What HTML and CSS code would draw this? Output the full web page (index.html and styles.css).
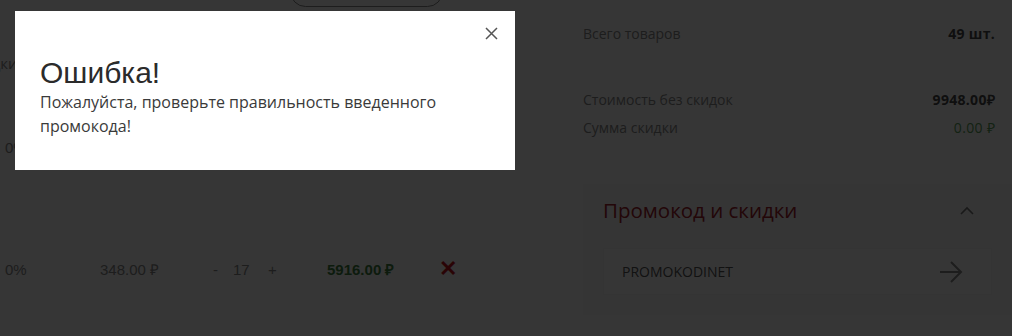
FILE: index.html
```html
<!DOCTYPE html>
<html lang="ru">
<head>
<meta charset="utf-8">
<title>Корзина</title>
<link rel="stylesheet" href="styles.css">
</head>
<body>
<div class="page">
  <div class="cart">
    <div class="cart-actions">
      <button class="pill">Удалить выбранные</button>
    </div>
    <div class="cart-head">Скидки</div>
    <div class="item item-first">
      <span class="c-disc">0%</span>
      <span class="c-price">348.00 ₽</span>
      <span class="c-qty"><span class="q-btn">-</span><span class="q-val">17</span><span class="q-btn">+</span></span>
      <span class="c-sum">5916.00 ₽</span>
      <span class="c-del">✕</span>
    </div>
    <div class="item">
      <span class="c-disc">0%</span>
      <span class="c-price">348.00 ₽</span>
      <span class="c-qty"><span class="q-btn">-</span><span class="q-val">17</span><span class="q-btn">+</span></span>
      <span class="c-sum">5916.00 ₽</span>
      <span class="c-del">✕</span>
    </div>
  </div>
  <aside class="summary">
    <div class="sum-row"><span>Всего товаров</span><b>49 шт.</b></div>
    <div class="sum-row sum-gap"><span>Стоимость без скидок</span><b>9948.00₽</b></div>
    <div class="sum-row"><span>Сумма скидки</span><b class="green">0.00 ₽</b></div>
    <section class="promo">
      <div class="promo-head">
        <h3>Промокод и скидки</h3>
        <svg class="chev" width="14" height="9" viewBox="0 0 14 9"><path d="M1 8 L7 2 L13 8" fill="none" stroke="#777" stroke-width="1.6"/></svg>
      </div>
      <div class="promo-input">
        <span>PROMOKODINET</span>
        <svg width="24" height="22" viewBox="0 0 24 22"><path d="M1 11 H22 M12 1 L22 11 L12 21" fill="none" stroke="#888" stroke-width="2"/></svg>
      </div>
    </section>
  </aside>
</div>
<div class="overlay">
  <div class="modal">
    <svg class="close" width="13" height="13" viewBox="0 0 13 13"><path d="M1 1 L12 12 M12 1 L1 12" fill="none" stroke="#555" stroke-width="1.5"/></svg>
    <h2 class="modal-title">Ошибка!</h2>
    <p class="modal-text">Пожалуйста, проверьте правильность введенного промокода!</p>
  </div>
</div>
</body>
</html>
```

FILE: styles.css
```css
html, body {
  margin: 0;
  padding: 0;
  background: #ffffff;
  overflow: hidden;
}
body {
  width: 1012px;
  height: 336px;
  font-family: "Open Sans", "Liberation Sans", sans-serif;
  color: #888;
}
.page {
  display: flex;
}
.cart {
  width: 583px;
  font-family: "Liberation Sans", Arial, sans-serif;
  font-size: 15px;
  color: #8a8a8a;
}
.cart-actions {
  display: flex;
  padding-left: 290px;
  margin-top: -24px;
}
.pill {
  width: 153px;
  height: 31px;
  border: 1px solid #888;
  border-radius: 16px;
  background: #fff;
  color: #777;
  font-family: "Open Sans", sans-serif;
  font-size: 13px;
}
.cart-head {
  margin-top: 46px;
  margin-left: -35px;
  font-family: "Open Sans", sans-serif;
  font-size: 15px;
  line-height: 20px;
}
.item {
  display: flex;
  align-items: center;
  height: 24px;
  margin-top: 98px;
}
.item-first {
  margin-top: 62px;
}
.c-disc { margin-left: 5px; width: 95px; }
.c-price { width: 113px; }
.c-qty {
  display: flex;
  align-items: center;
  width: 114px;
}
.q-btn { width: 20px; }
.q-val { width: 35px; }
.c-sum {
  width: 112px;
  font-weight: bold;
  color: #3d7f3f;
}
.c-del {
  color: #c4161c;
  font-weight: bold;
  font-size: 22px;
}
.summary {
  width: 412px;
  padding-top: 24px;
  font-size: 14px;
}
.sum-row {
  display: flex;
  justify-content: space-between;
  line-height: 20px;
  height: 28px;
  color: #8a8a8a;
}
.sum-row b {
  color: #4a4a4a;
  letter-spacing: 0.3px;
}
.sum-gap {
  margin-top: 38px;
}
.sum-row .green {
  color: #5aa05a;
  font-weight: 400;
}
.promo {
  margin-top: 38px;
  margin-right: -17px;
  padding: 12px 20px 20px;
  background: #fafafa;
}
.promo-head {
  display: flex;
  justify-content: space-between;
  align-items: center;
  padding-right: 18px;
}
.promo h3 {
  margin: 0;
  font-size: 20.5px;
  font-weight: 400;
  line-height: 28px;
  color: #a3212b;
}
.promo-input {
  display: flex;
  justify-content: space-between;
  align-items: center;
  margin-top: 24px;
  height: 45px;
  padding: 0 28px 0 18px;
  background: #fff;
  border: 1px solid #f6f6f6;
  color: #555;
  font-size: 14px;
}
.overlay {
  position: fixed;
  inset: 0;
  background: rgba(0, 0, 0, 0.79);
}
.modal {
  position: absolute;
  left: 15px;
  top: 11px;
  width: 450px;
  height: 114px;
  padding: 45px 25px 0;
  background: #fff;
}
.close {
  position: absolute;
  top: 16px;
  right: 17px;
}
.modal-title {
  margin: 0;
  font-family: "Liberation Sans", Arial, sans-serif;
  font-size: 30px;
  font-weight: 400;
  line-height: 34px;
  color: #2b2b2b;
}
.modal-text {
  margin: 0;
  font-family: "Open Sans", sans-serif;
  font-size: 16px;
  line-height: 24px;
  color: #3a3a3a;
}
```
